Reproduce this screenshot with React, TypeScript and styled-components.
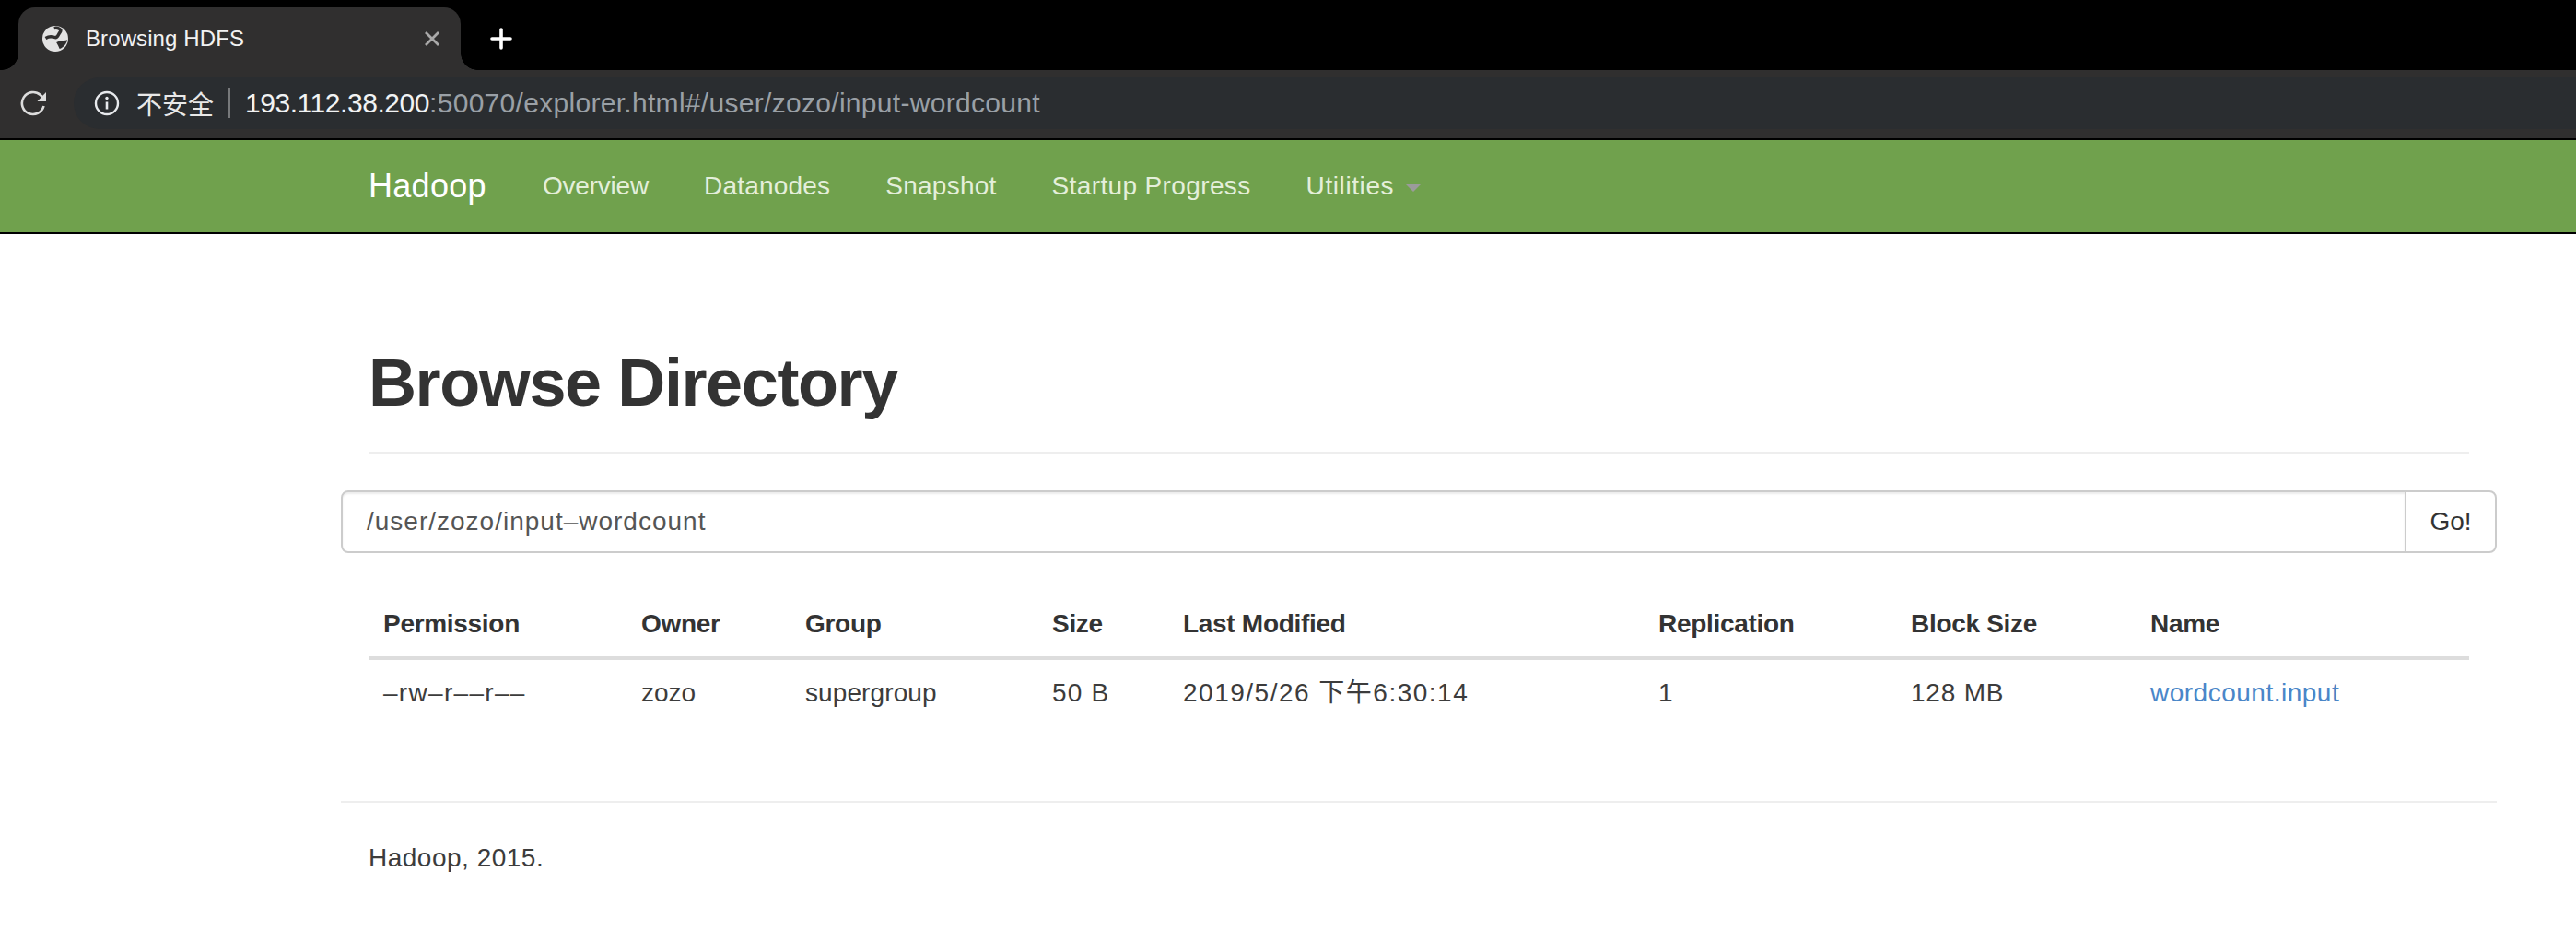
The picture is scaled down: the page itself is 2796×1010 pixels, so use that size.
import styled, { createGlobalStyle } from 'styled-components';

const GlobalStyle = createGlobalStyle`
  html, body {
    margin: 0;
    padding: 0;
    background: #fff;
  }
  body {
    width: 2796px;
    height: 1010px;
    overflow: hidden;
    font-family: "Liberation Sans", Arial, "Noto Sans CJK SC", sans-serif;
    color: #333;
  }
`;

const TabStrip = styled.div`
  display: flex;
  align-items: flex-end;
  height: 76px;
  padding-left: 20px;
  background: #000;
`;

const Tab = styled.div`
  position: relative;
  display: flex;
  align-items: center;
  width: 480px;
  height: 68px;
  padding: 0 23px 0 26px;
  box-sizing: border-box;
  background: #302f2f;
  border-radius: 18px 18px 0 0;
  color: #f2f2f2;
  font-size: 24px;

  &::before,
  &::after {
    content: '';
    position: absolute;
    bottom: 0;
    width: 18px;
    height: 18px;
  }
  &::before {
    left: -18px;
    background: radial-gradient(circle at 0 0, transparent 17.5px, #302f2f 18px);
  }
  &::after {
    right: -18px;
    background: radial-gradient(circle at 100% 0, transparent 17.5px, #302f2f 18px);
  }
`;

const TabTitle = styled.span`
  flex: 1;
  margin-left: 19px;
  letter-spacing: 0.1px;
`;

const NewTab = styled.div`
  display: flex;
  align-items: center;
  height: 68px;
  margin-left: 32px;
`;

const Toolbar = styled.div`
  display: flex;
  align-items: center;
  height: 76px;
  padding-bottom: 2px;
  box-sizing: border-box;
  background: #302f2f;
  border-bottom: 2px solid #000;
`;

const Reload = styled.div`
  display: flex;
  width: 80px;
  padding-left: 22px;
  box-sizing: border-box;
`;

const Omnibox = styled.div`
  display: flex;
  align-items: center;
  flex: 1;
  height: 56px;
  padding-left: 22px;
  background: #2a2d30;
  border-radius: 28px 0 0 28px;
  font-size: 30px;
`;

const Insecure = styled.span`
  margin-left: 18px;
  color: #e8e8e8;
  font-size: 28px;
`;

const Separator = styled.span`
  width: 2px;
  height: 32px;
  margin: 0 16px;
  background: #77797b;
`;

const Host = styled.span`
  color: #f1f3f4;
  letter-spacing: -0.45px;
`;

const UrlRest = styled.span`
  color: #9aa0a6;
  letter-spacing: 0.3px;
`;

const Navbar = styled.nav`
  display: flex;
  align-items: center;
  height: 100px;
  padding-left: 400px;
  background: #70a14d;
  border-bottom: 2px solid #000;
`;

const Brand = styled.span`
  margin-right: 61px;
  color: #fff;
  font-size: 36px;
  letter-spacing: 0.3px;
`;

const NavItem = styled.span<{ $tracking?: number }>`
  display: flex;
  align-items: center;
  margin-right: 60px;
  color: #e4efdb;
  font-size: 28px;
  letter-spacing: ${(p) => p.$tracking ?? 0}px;
`;

const Caret = styled.span`
  width: 0;
  height: 0;
  margin-left: 13px;
  margin-top: 4px;
  border-left: 8px solid transparent;
  border-right: 8px solid transparent;
  border-top: 8px solid #9b9b9b;
`;

const Container = styled.main`
  width: 2340px;
  margin-left: 370px;
`;

const Header = styled.div`
  margin: 0 30px;
  padding: 121px 0 35px;
  border-bottom: 2px solid #eee;
`;

const Title = styled.h1`
  margin: 0;
  color: #333;
  font-size: 72px;
  line-height: 80px;
  font-weight: 700;
  letter-spacing: -1.4px;
`;

const SearchGroup = styled.div`
  display: flex;
  height: 68px;
  margin-top: 40px;
`;

const PathInput = styled.div`
  flex: 1;
  display: flex;
  align-items: center;
  padding-left: 26px;
  border: 2px solid #ccc;
  border-radius: 8px 0 0 8px;
  box-shadow: inset 0 2px 2px rgba(0, 0, 0, 0.075);
  color: #555;
  font-size: 28px;
  letter-spacing: 1px;
`;

const GoButton = styled.div`
  display: flex;
  align-items: center;
  justify-content: center;
  width: 96px;
  margin-left: -2px;
  border: 2px solid #ccc;
  border-radius: 0 8px 8px 0;
  color: #333;
  font-size: 28px;
`;

const FileTable = styled.table`
  width: 2280px;
  margin: 40px 30px 0;
  border-collapse: collapse;
  table-layout: fixed;
  font-size: 28px;
`;

const HeadCell = styled.th<{ $width: number }>`
  width: ${(p) => p.$width}px;
  padding: 17px 16px 15px;
  border-bottom: 4px solid #ddd;
  box-sizing: border-box;
  color: #333;
  font-weight: 700;
  text-align: left;
  line-height: 40px;
  letter-spacing: -0.3px;
`;

const Cell = styled.td<{ $tracking: number }>`
  padding: 16px;
  line-height: 40px;
  color: #3c3c3c;
  letter-spacing: ${(p) => p.$tracking}px;
`;

const FileLink = styled.a`
  color: #4a86c8;
`;

const FooterRule = styled.hr`
  margin: 81px 0 0;
  border: 0;
  border-top: 2px solid #eee;
`;

const Footer = styled.p`
  margin: 40px 30px 0;
  color: #3c3c3c;
  font-size: 28px;
  line-height: 40px;
  letter-spacing: 0.5px;
`;

const GlobeIcon = () => (
  <svg width="28" height="28" viewBox="0 0 24 24">
    <circle cx="12" cy="12" r="12" fill="#e3e3e3" />
    <path d="M11 2.200C14 1.400 18.500 3.200 16.500 5.800C14.500 8 14.500 11.200 11.800 10.800C9 10.300 7.500 8.800 3 11.500" fill="none" stroke="#302f2f" strokeWidth="3" />
    <path d="M13 15.500C15.500 13.500 19 14.500 23.200 13C22.500 17 19.500 20 16 21.500C15.200 19.500 14.200 17.500 13 15.500Z" fill="#302f2f" />
  </svg>
);

const CloseIcon = () => (
  <svg width="16" height="16" viewBox="0 0 16 16" stroke="#a9a9a9" strokeWidth="2.800" fill="none">
    <path d="M1 1l14 14M15 1L1 15" />
  </svg>
);

const PlusIcon = () => (
  <svg width="24" height="24" viewBox="0 0 24 24" stroke="#fff" strokeWidth="3.600" strokeLinecap="round" fill="none">
    <path d="M12 2v20M2 12h20" />
  </svg>
);

const ReloadIcon = () => (
  <svg width="28" height="28" viewBox="0 0 28 28" fill="none">
    <path d="M25.500 17A12 12 0 1 1 21.800 5L26 9" stroke="#dcdcdc" strokeWidth="2.600" />
    <path d="M28 2V12H18.500Z" fill="#dcdcdc" />
  </svg>
);

const InfoIcon = () => (
  <svg width="28" height="28" viewBox="0 0 28 28" fill="none">
    <circle cx="14" cy="14" r="12" stroke="#e8eaed" strokeWidth="2.400" />
    <path d="M14 12.500v8" stroke="#e8eaed" strokeWidth="2.600" />
    <circle cx="14" cy="8.500" r="1.700" fill="#e8eaed" />
  </svg>
);

const columns = [
  { label: 'Permission', width: 280, value: '–rw–r––r––', tracking: 1.300 },
  { label: 'Owner', width: 178, value: 'zozo', tracking: 0 },
  { label: 'Group', width: 268, value: 'supergroup', tracking: 0.100 },
  { label: 'Size', width: 142, value: '50 B', tracking: 1.200 },
  { label: 'Last Modified', width: 516, value: '2019/5/26 下午6:30:14', tracking: 1.500 },
  { label: 'Replication', width: 274, value: '1', tracking: 0 },
  { label: 'Block Size', width: 260, value: '128 MB', tracking: 0.800 },
  { label: 'Name', width: 362, value: 'wordcount.input', tracking: 0.500 },
];

const App = () => {
  return (
    <>
      <GlobalStyle />
      <TabStrip>
        <Tab>
          <GlobeIcon />
          <TabTitle>Browsing HDFS</TabTitle>
          <CloseIcon />
        </Tab>
        <NewTab>
          <PlusIcon />
        </NewTab>
      </TabStrip>
      <Toolbar>
        <Reload>
          <ReloadIcon />
        </Reload>
        <Omnibox>
          <InfoIcon />
          <Insecure>不安全</Insecure>
          <Separator />
          <Host>193.112.38.200</Host>
          <UrlRest>:50070/explorer.html#/user/zozo/input-wordcount</UrlRest>
        </Omnibox>
      </Toolbar>
      <Navbar>
        <Brand>Hadoop</Brand>
        <NavItem $tracking={-0.200}>Overview</NavItem>
        <NavItem $tracking={0.200}>Datanodes</NavItem>
        <NavItem $tracking={0.250}>Snapshot</NavItem>
        <NavItem $tracking={0.370}>Startup Progress</NavItem>
        <NavItem $tracking={0.600}>
          Utilities
          <Caret />
        </NavItem>
      </Navbar>
      <Container>
        <Header>
          <Title>Browse Directory</Title>
        </Header>
        <SearchGroup>
          <PathInput>/user/zozo/input–wordcount</PathInput>
          <GoButton>Go!</GoButton>
        </SearchGroup>
        <FileTable>
          <thead>
            <tr>
              {columns.map((c) => (
                <HeadCell key={c.label} $width={c.width}>
                  {c.label}
                </HeadCell>
              ))}
            </tr>
          </thead>
          <tbody>
            <tr>
              {columns.map((c) => (
                <Cell key={c.label} $tracking={c.tracking}>
                  {c.label === 'Name' ? <FileLink>{c.value}</FileLink> : c.value}
                </Cell>
              ))}
            </tr>
          </tbody>
        </FileTable>
        <FooterRule />
        <Footer>Hadoop, 2015.</Footer>
      </Container>
    </>
  );
};

export default App;
